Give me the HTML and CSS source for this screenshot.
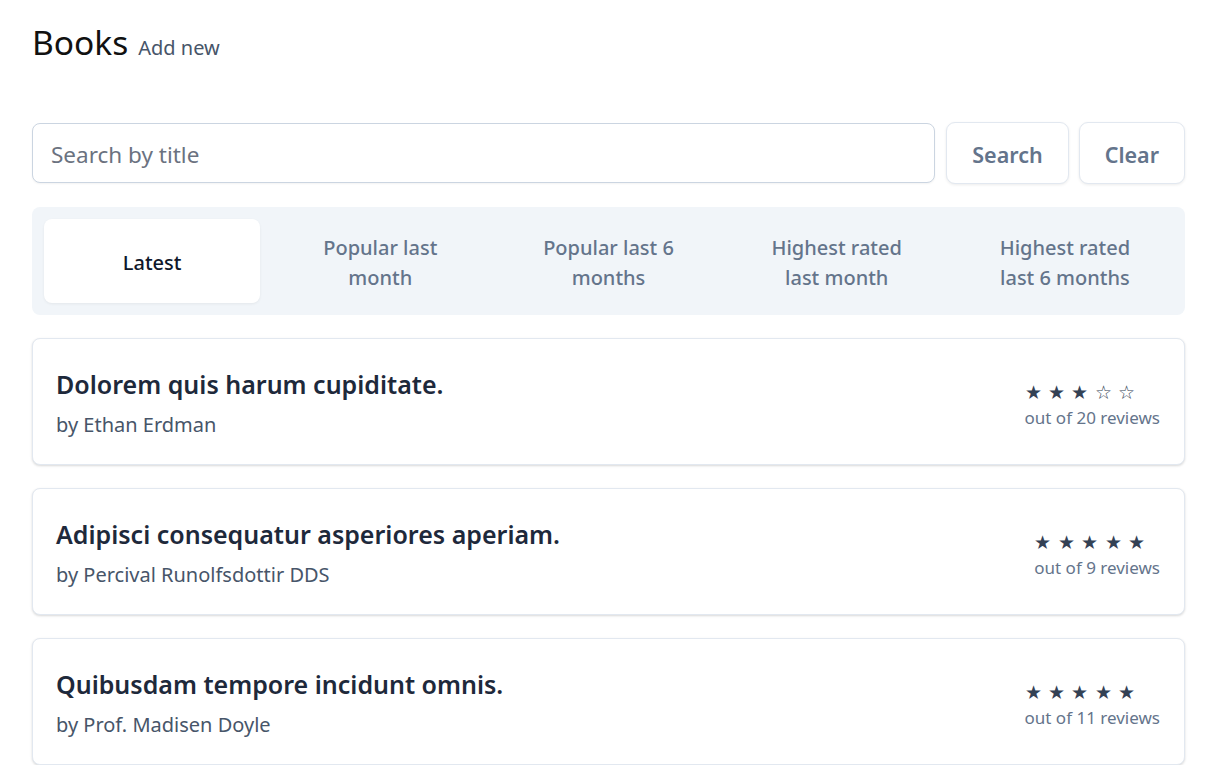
FILE: index.html
```html
<!DOCTYPE html>
<html lang="en">
<head>
<meta charset="utf-8">
<title>Books</title>
<link rel="stylesheet" href="styles.css">
</head>
<body>
<main class="page">
  <header class="header">
    <h1 class="title">Books</h1>
    <a class="add-link" href="#">Add new</a>
  </header>

  <form class="search-row">
    <input class="search-input" type="text" placeholder="Search by title">
    <button class="btn" type="button">Search</button>
    <button class="btn" type="button">Clear</button>
  </form>

  <nav class="tabs">
    <a class="tab tab-active" href="#">Latest</a>
    <a class="tab" href="#">Popular last month</a>
    <a class="tab" href="#">Popular last 6 months</a>
    <a class="tab" href="#">Highest rated last month</a>
    <a class="tab" href="#">Highest rated last 6 months</a>
  </nav>

  <ul class="book-list">
    <li class="book">
      <div class="book-info">
        <div class="book-title">Dolorem quis harum cupiditate.</div>
        <div class="book-author">by Ethan Erdman</div>
      </div>
      <div class="book-rating">
        <div class="stars">★ ★ ★ ☆ ☆</div>
        <div class="reviews">out of 20 reviews</div>
      </div>
    </li>
    <li class="book">
      <div class="book-info">
        <div class="book-title">Adipisci consequatur asperiores aperiam.</div>
        <div class="book-author">by Percival Runolfsdottir DDS</div>
      </div>
      <div class="book-rating">
        <div class="stars">★ ★ ★ ★ ★</div>
        <div class="reviews">out of 9 reviews</div>
      </div>
    </li>
    <li class="book">
      <div class="book-info">
        <div class="book-title">Quibusdam tempore incidunt omnis.</div>
        <div class="book-author">by Prof. Madisen Doyle</div>
      </div>
      <div class="book-rating">
        <div class="stars">★ ★ ★ ★ ★</div>
        <div class="reviews">out of 11 reviews</div>
      </div>
    </li>
  </ul>
</main>
</body>
</html>
```
FILE: styles.css
```css
* { box-sizing: border-box; }
html, body { margin: 0; padding: 0; background: #fff; }
body {
  font-family: "Noto Sans", "Open Sans", sans-serif;
  color: #1e293b;
}
.page {
  padding: 16px 24px 0 32px;
}
.header {
  display: flex;
  align-items: baseline;
  gap: 10px;
  height: 52px;
}
.title {
  margin: 0;
  font-size: 33.5px;
  font-weight: 400;
  line-height: 52px;
  color: #111;
}
.add-link {
  font-size: 20px;
  color: #475569;
  text-decoration: none;
}
.search-row {
  display: flex;
  align-items: center;
  gap: 11px;
  margin: 54px 0 0;
}
.search-input {
  flex: 1;
  height: 60px;
  border: 1px solid #cbd5e1;
  border-radius: 8px;
  padding: 2px 18px 0;
  font-family: inherit;
  font-size: 22.5px;
  color: #1e293b;
  box-shadow: 0 1px 2px rgba(0,0,0,0.05);
}
.search-input::placeholder { color: #6b7280; }
.btn {
  height: 62px;
  padding: 2px 25px 0;
  border: 1px solid #e2e8f0;
  border-radius: 9px;
  background: #fff;
  font-family: inherit;
  font-size: 21.5px;
  font-weight: 600;
  color: #64748b;
  box-shadow: 0 1px 3px rgba(0,0,0,0.08);
}
.btn + .btn { margin-left: -1px; }
.tabs {
  display: flex;
  gap: 12px;
  margin-top: 23px;
  padding: 12px;
  background: #f1f5f9;
  border-radius: 8px;
}
.tab {
  flex: 1;
  height: 84px;
  display: flex;
  align-items: center;
  justify-content: center;
  text-align: center;
  padding: 4px 36px 0;
  font-size: 20px;
  line-height: 30px;
  font-weight: 500;
  color: #64748b;
  text-decoration: none;
  border-radius: 8px;
}
.tab-active {
  background: #fff;
  color: #0f172a;
  box-shadow: 0 1px 3px rgba(0,0,0,0.06);
}
.book-list {
  list-style: none;
  margin: 23px 0 0;
  padding: 0;
  display: flex;
  flex-direction: column;
  gap: 23px;
}
.book {
  display: flex;
  align-items: center;
  justify-content: space-between;
  height: 127px;
  padding: 0 24px 0 23px;
  border: 1px solid #e2e8f0;
  border-radius: 8px;
  background: #fff;
  box-shadow: 0 1px 3px rgba(0,0,0,0.1), 0 1px 2px rgba(0,0,0,0.06);
}
.book-info {
  margin-top: 3px;
}
.book-title {
  font-size: 25px;
  font-weight: 600;
  line-height: 34px;
  color: #1e293b;
}
.book-author {
  margin-top: 9px;
  font-size: 20px;
  line-height: 30px;
  color: #475569;
}
.book-rating {
  text-align: left;
  margin-top: 6px;
}
.stars {
  font-size: 19px;
  line-height: 25px;
  color: #334155;
  letter-spacing: 0.75px;
}
.reviews {
  font-size: 17px;
  line-height: 25px;
  color: #64748b;
}
```
